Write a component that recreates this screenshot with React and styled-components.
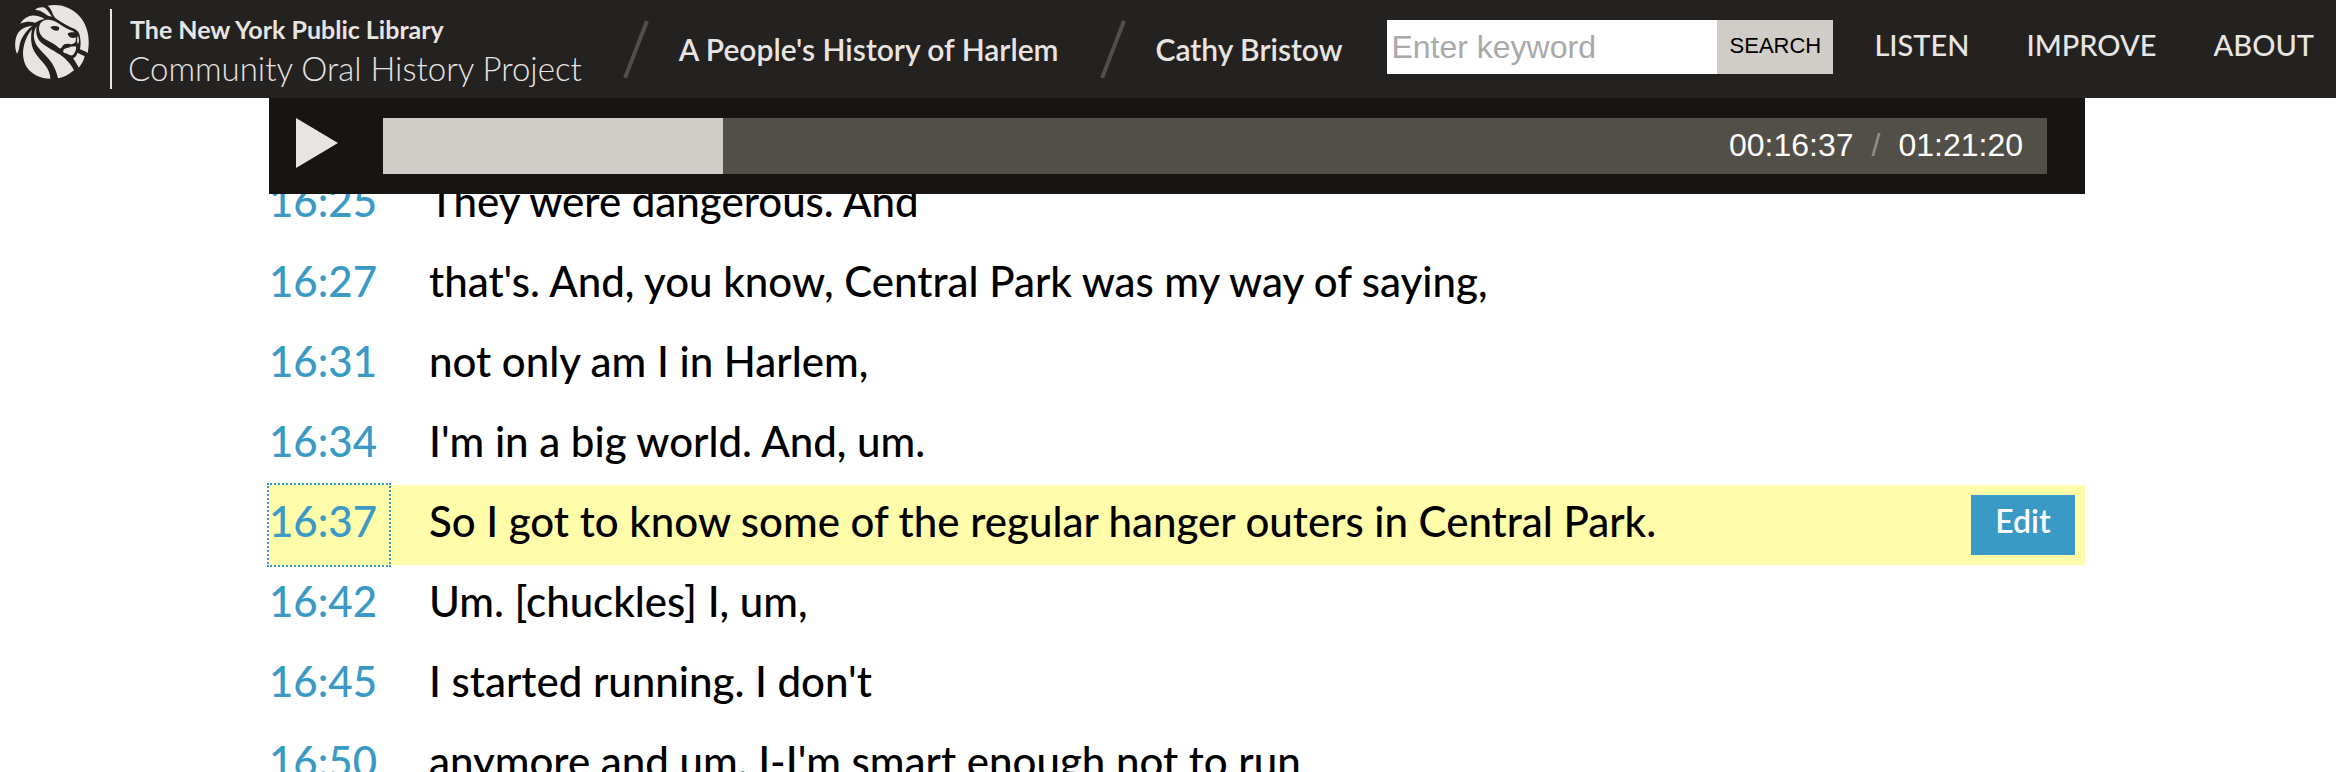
import React from "react";
import styled, { createGlobalStyle } from "styled-components";

const color = {
  header: "#232220",
  player: "#161513",
  track: "#524e48",
  stone: "#d0ccc7",
  light: "#e8e4e2",
  link: "#3a9ac6",
  active: "#fffcaa",
};

const GlobalStyle = createGlobalStyle`
  *, *::before, *::after { box-sizing: border-box; }
  body {
    margin: 0;
    background: #fff;
    color: #000;
    font-family: Lato, "Open Sans", sans-serif;
  }
  button, input { border: 0; border-radius: 0; margin: 0; padding: 0; font: inherit; }
  button { cursor: pointer; }
  a { color: inherit; text-decoration: none; }
`;

const Page = styled.div`
  height: 100vh;
  overflow: hidden;
`;

const Header = styled.header`
  position: sticky;
  top: 0;
  z-index: 2;
  display: flex;
  align-items: center;
  min-height: 98px;
  padding: 0 22px 0 14px;
  background: ${color.header};
  color: ${color.light};
  white-space: nowrap;
`;

const Brand = styled.a`
  display: flex;
  align-items: center;
`;

const Lion = styled.svg`
  width: 76px;
  height: 76px;
  margin: 0 20px 14px 0;
  fill: ${color.light};
`;

const BrandText = styled.span`
  display: flex;
  flex-direction: column;
  height: 80px;
  padding: 4px 0 0 16px;
  border-left: 2px solid ${color.light};
`;

const Library = styled.span`
  padding-left: 2px;
  font-size: 25px;
  font-weight: 700;
  line-height: 32px;
`;

const Project = styled.span`
  font-size: 33px;
  font-weight: 300;
  line-height: 46px;
`;

const Crumbs = styled.nav`
  display: flex;
  align-items: center;
  font-size: 30px;
  font-weight: 600;
`;

const Slash = styled.svg`
  width: 26px;
  height: 58px;
  margin: 0 30px 0 41px;
  fill: none;
  stroke: ${color.track};
  stroke-width: 4;
`;

const Search = styled.form`
  display: flex;
  height: 54px;
  margin: 0 41px 4px auto;
  font-family: "Liberation Sans", Arial, sans-serif;
`;

const Keyword = styled.input`
  width: 330px;
  padding: 0 4px;
  background: #fff;
  color: #000;
  font-size: 32px;
  &::placeholder { color: #a9a9a9; opacity: 1; }
`;

const SearchButton = styled.button`
  width: 116px;
  padding-bottom: 2px;
  background: ${color.stone};
  color: #000;
  font-size: 22px;
`;

const Menu = styled.nav`
  display: flex;
  gap: 57px;
  padding-bottom: 10px;
  font-size: 29px;
  font-weight: 500;
`;

const Content = styled.main`
  padding: 0 251px 0 269px;
`;

const Player = styled.section`
  position: sticky;
  top: 98px;
  z-index: 1;
  display: flex;
  padding: 20px 38px 20px 0;
  background: ${color.player};
`;

const PlayButton = styled.button`
  display: flex;
  flex: none;
  width: 114px;
  padding-left: 27px;
  background: none;
`;

const PlayIcon = styled.svg`
  width: 42px;
  height: 50px;
  fill: ${color.light};
`;

const Track = styled.div`
  display: flex;
  flex: 1;
  height: 56px;
  background: ${color.track};
`;

const Played = styled.div`
  background: ${color.stone};
`;

const Times = styled.div`
  display: flex;
  gap: 18px;
  margin-left: auto;
  padding-right: 24px;
  color: #fff;
  font: 32px/54px "Liberation Sans", Arial, sans-serif;
`;

const TimesSlash = styled.span`
  color: #938f89;
`;

const Transcript = styled.ol`
  margin: -29px 0 0;
  padding: 0;
  list-style: none;
`;

const Line = styled.li`
  display: flex;
  gap: 40px;
  height: 80px;
  padding-right: 10px;
  background: ${(p) => (p.$active ? color.active : "transparent")};
  font-size: 42px;
  font-weight: 500;
  line-height: 72px;
  white-space: nowrap;
`;

const Stamp = styled.a`
  flex: none;
  width: 120px;
  color: ${color.link};
  outline: ${(p) => (p.$active ? `2px dotted ${color.link}` : "none")};
`;

const Edit = styled.button`
  align-self: center;
  width: 104px;
  height: 60px;
  margin-left: auto;
  padding-bottom: 8px;
  background: ${color.link};
  color: #fff;
  font-size: 32px;
  font-weight: 600;
  line-height: 52px;
`;

const duration = 4880;
const position = 997;

const lines = [
  ["16:25", "They were dangerous. And"],
  ["16:27", "that's. And, you know, Central Park was my way of saying,"],
  ["16:31", "not only am I in Harlem,"],
  ["16:34", "I'm in a big world. And, um."],
  ["16:37", "So I got to know some of the regular hanger outers in Central Park."],
  ["16:42", "Um. [chuckles] I, um,"],
  ["16:45", "I started running. I don't"],
  ["16:50", "anymore and um. I-I'm smart enough not to run"],
];

function LionMark() {
  return (
    <Lion viewBox="42 12 228 228" aria-hidden="true">
      {/* disc behind the head */}
      <path d="M143 17C181 9 219 23 243 54C264 81 271 119 263 159C256 154 247 151 240 148C243 132 242 116 238 103C235 93 228 88 217 84C200 78 184 66 171 58C162 52 160 45 156 36C153 28 149 22 143 17Z" />
      {/* mane tufts */}
      <path d="M105 29C115 22 124 21 134 23C143 29 148 39 156 50C147 50 140 46 133 40C125 33 116 30 105 29Z" />
      <path d="M61 71C68 58 80 49 94 47C110 46 123 50 134 57C120 59 111 66 105 68C91 64 76 65 61 71Z" />
      <path d="M51 161C44 147 44 125 49 110C55 91 71 80 97 77C78 93 65 111 60 130C57 141 58 152 51 161Z" />
      {/* mane */}
      <path d="M96 88C86 99 75 120 71 141C67 159 69 183 80 201C95 224 123 236 151 236C151 222 145 208 135 195C119 174 102 160 96 137C92 119 93 103 96 88Z" />
      <path d="M110 79C107 94 109 109 117 121C129 136 151 146 170 158C192 170 211 188 222 211C208 223 191 232 174 235C171 221 165 205 156 190C145 172 126 157 113 140C100 124 97 97 110 79Z" />
      {/* face */}
      <path
        fillRule="evenodd"
        d="M136 60C124 63 117 73 117 87C117 99 124 110 136 118C150 127 167 133 177 144C181 147 184 145 187 139C191 131 200 130 210 132C216 134 222 131 226 127C228 122 228 118 227 112C218 116 209 113 204 105C202 99 206 96 224 97C217 91 205 88 196 83C182 75 172 66 160 62C152 59 144 58 136 60ZM151 81C159 77 169 77 178 82L176 91C167 94 157 91 151 81Z"
      />
      <path d="M233 107C238 114 238 125 234 133C230 127 231 114 233 107Z" />
      {/* chin and chest */}
      <path d="M190 151C193 144 203 145 210 141C216 139 222 140 228 139C230 147 226 159 219 165C210 169 204 162 197 160C191 159 188 156 190 151Z" />
      <path d="M232 159C239 161 246 165 254 169C251 182 244 194 236 203C231 193 225 183 219 175C226 172 230 166 232 159Z" />
    </Lion>
  );
}

function CrumbSlash() {
  return (
    <Slash viewBox="0 0 26 58" aria-hidden="true">
      <path d="M2 58L24 1" />
    </Slash>
  );
}

export default function App() {
  return (
    <Page>
      <GlobalStyle />
      <Header>
        <Brand href="#home">
          <LionMark />
          <BrandText>
            <Library>The New York Public Library</Library>
            <Project>Community Oral History Project</Project>
          </BrandText>
        </Brand>
        <Crumbs aria-label="Breadcrumb">
          <CrumbSlash />
          <a href="#collection">A People's History of Harlem</a>
          <CrumbSlash />
          <a href="#interview">Cathy Bristow</a>
        </Crumbs>
        <Search role="search" onSubmit={(e) => e.preventDefault()}>
          <Keyword type="text" aria-label="Enter keyword" placeholder="Enter keyword" />
          <SearchButton type="submit">SEARCH</SearchButton>
        </Search>
        <Menu aria-label="Main">
          <a href="#listen">LISTEN</a>
          <a href="#improve">IMPROVE</a>
          <a href="#about">ABOUT</a>
        </Menu>
      </Header>
      <Content>
        <Player aria-label="Audio player">
          <PlayButton type="button" aria-label="Play">
            <PlayIcon viewBox="0 0 42 50" aria-hidden="true">
              <path d="M0 0L42 25L0 50Z" />
            </PlayIcon>
          </PlayButton>
          <Track>
            <Played
              role="progressbar"
              aria-label="Played"
              aria-valuemin={0}
              aria-valuemax={duration}
              aria-valuenow={position}
              style={{ width: `${(position / duration) * 100}%` }}
            />
            <Times>
              <span>00:16:37</span>
              <TimesSlash>/</TimesSlash>
              <span>01:21:20</span>
            </Times>
          </Track>
        </Player>
        <Transcript>
          {lines.map(([time, text]) => {
            const active = time === "16:37";
            return (
              <Line key={time} $active={active}>
                <Stamp href={`#${time}`} $active={active}>{time}</Stamp>
                <span>{text}</span>
                {active && <Edit type="button">Edit</Edit>}
              </Line>
            );
          })}
        </Transcript>
      </Content>
    </Page>
  );
}
